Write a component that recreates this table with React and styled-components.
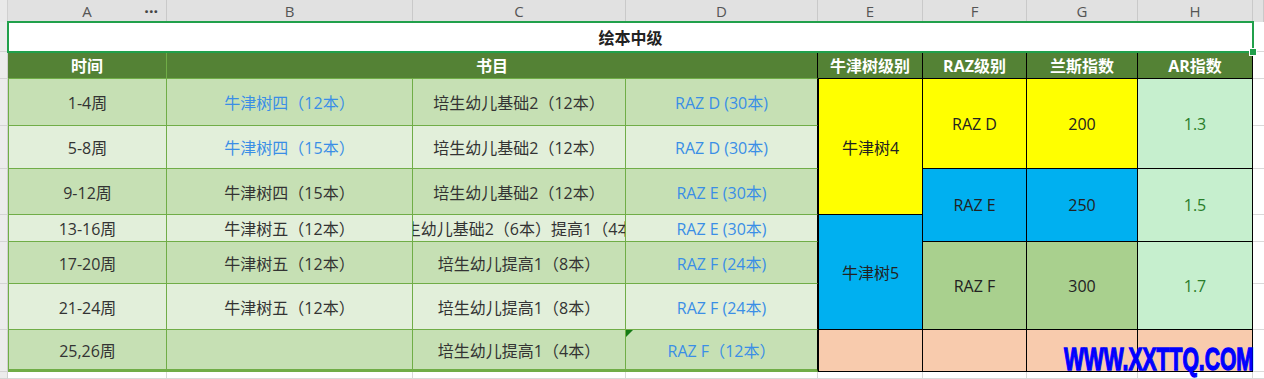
import React from 'react';
import styled, { createGlobalStyle, css } from 'styled-components';

const Global = createGlobalStyle`
  html, body { margin: 0; padding: 0; background: #fff; }
  body { font-family: "Open Sans", "Noto Sans CJK SC", sans-serif; }
`;

const GREEN = '#70ad47';
const GRID = '#d9d9d9';

const Sheet = styled.div`
  position: relative;
  display: grid;
  grid-template-columns: 8px 159px 246px 213px 192px 105px 104px 111px 115px 1fr;
  grid-template-rows: 22px 30px 27px 47px 43px 46px 27px 42px 46px 42px 1fr;
  width: 1264px;
  height: 379px;
  overflow: hidden;
  font-size: 16px;
  color: #333;
  & > * { box-sizing: border-box; min-width: 0; }
`;

const Corner = styled.div`
  background: #e9e9e9;
  border-right: 1px solid #d0d0d0;
`;

const ColHead = styled.div`
  position: relative;
  display: flex;
  align-items: center;
  justify-content: center;
  background: #e1e1e1;
  border-right: 1px solid #c9c9c9;
  color: #555;
  font-family: "Open Sans", sans-serif;
  font-size: 15px;
`;

const More = styled.span`
  position: absolute;
  right: 8px;
  top: 0;
  font-size: 16px;
  font-weight: 700;
  color: #444;
`;

const RowHead = styled.div`
  background: #ececec;
  border-right: 1px solid #d0d0d0;
  border-bottom: 1px solid #d4d4d4;
`;

const Filler = styled.div`
  background: #fff;
  border-right: ${({ $open }) => ($open ? 'none' : `1px solid ${GRID}`)};
  border-bottom: 1px solid ${GRID};
`;

const centred = css`
  display: flex;
  align-items: center;
  justify-content: center;
  white-space: nowrap;
  overflow: hidden;
`;

const TitleCell = styled.div`
  ${centred};
  position: relative;
  z-index: 2;
  overflow: visible;
  grid-column: 2 / 10;
  background: #fff;
  font-weight: 700;
  color: #222;
  outline: 2px solid #21a04b;
  outline-offset: -1px;
`;

const Handle = styled.span`
  position: absolute;
  right: -4px;
  bottom: -4px;
  width: 6px;
  height: 6px;
  background: #21a04b;
  border: 1px solid #fff;
`;

const HeadCell = styled.div`
  ${centred};
  grid-column: span ${({ $span }) => $span || 1};
  background: #548235;
  color: #fff;
  font-weight: 700;
  border-right: 1px solid ${({ $rule }) => $rule || GREEN};
  border-bottom: 1px solid ${({ $black }) => ($black ? '#000' : GREEN)};
`;

const BodyCell = styled.div`
  ${centred};
  position: relative;
  background: ${({ $dark }) => ($dark ? '#c6e0b4' : '#e2efda')};
  color: ${({ $blue }) => ($blue ? '#3a8ee6' : '#333')};
  border-left: ${({ $first }) => ($first ? `1px solid ${GREEN}` : 'none')};
  border-right: 1px solid ${({ $rule }) => $rule || GREEN};
  border-bottom: ${({ $last }) => ($last ? 3 : 1)}px solid ${GREEN};
`;

const Note = styled.span`
  position: absolute;
  left: 0;
  top: 0;
  width: 0;
  height: 0;
  border-top: 7px solid #157a15;
  border-right: 7px solid transparent;
`;

const LevelCell = styled.div`
  ${centred};
  grid-column: ${({ $c }) => $c};
  grid-row: ${({ $r }) => $r} / span ${({ $rs }) => $rs || 1};
  background: ${({ $bg }) => $bg};
  color: ${({ $ink }) => $ink || '#222'};
  border-left: ${({ $c }) => ($c === 6 ? '1px solid #000' : 'none')};
  border-right: 1px solid #000;
  border-bottom: 1px solid #000;
`;

const Mark = styled.div`
  position: absolute;
  right: 10px;
  bottom: 4px;
  z-index: 3;
  font-family: "Liberation Sans", "DejaVu Sans", sans-serif;
  font-weight: 700;
  font-size: 32px;
  line-height: 1;
  color: #0000ff;
  -webkit-text-stroke: 1.3px #0000ff;
  transform: scaleX(0.66);
  transform-origin: right bottom;
  white-space: nowrap;
`;

const LETTERS = ['A', 'B', 'C', 'D', 'E', 'F', 'G', 'H'];

const ROWS = [
  ['1-4周', ['牛津树四（12本）', true], ['培生幼儿基础2（12本）'], ['RAZ D (30本)', true]],
  ['5-8周', ['牛津树四（15本）', true], ['培生幼儿基础2（12本）'], ['RAZ D (30本)', true]],
  ['9-12周', ['牛津树四（15本）'], ['培生幼儿基础2（12本）'], ['RAZ E (30本)', true]],
  ['13-16周', ['牛津树五（12本）'], ['培生幼儿基础2（6本）提高1（4本）'], ['RAZ E (30本)', true]],
  ['17-20周', ['牛津树五（12本）'], ['培生幼儿提高1（8本）'], ['RAZ F (24本)', true]],
  ['21-24周', ['牛津树五（12本）'], ['培生幼儿提高1（8本）'], ['RAZ F (24本)', true]],
  ['25,26周', [''], ['培生幼儿提高1（4本）'], ['RAZ F（12本）', true, true]],
];

const YELLOW = '#ffff00';
const BLUE = '#00b0f0';
const OLIVE = '#a9d08e';
const PEACH = '#f8cbad';
const MINT = '#c6efce';

const LEVELS = [
  { c: 6, r: 4, rs: 3, bg: YELLOW, t: '牛津树4' },
  { c: 6, r: 7, rs: 3, bg: BLUE, t: '牛津树5' },
  { c: 6, r: 10, bg: PEACH, t: '' },
  { c: 7, r: 4, rs: 2, bg: YELLOW, t: 'RAZ D' },
  { c: 7, r: 6, rs: 2, bg: BLUE, t: 'RAZ E' },
  { c: 7, r: 8, rs: 2, bg: OLIVE, t: 'RAZ F' },
  { c: 7, r: 10, bg: PEACH, t: '' },
  { c: 8, r: 4, rs: 2, bg: YELLOW, t: '200' },
  { c: 8, r: 6, rs: 2, bg: BLUE, t: '250' },
  { c: 8, r: 8, rs: 2, bg: OLIVE, t: '300' },
  { c: 8, r: 10, bg: PEACH, t: '' },
  { c: 9, r: 4, rs: 2, bg: MINT, ink: '#2a7d2a', t: '1.3' },
  { c: 9, r: 6, rs: 2, bg: MINT, ink: '#2a7d2a', t: '1.5' },
  { c: 9, r: 8, rs: 2, bg: MINT, ink: '#2a7d2a', t: '1.7' },
  { c: 9, r: 10, bg: PEACH, t: '' },
];

export default function App() {
  return (
    <>
      <Global />
      <Sheet>
        <Corner />
        {LETTERS.map((l, i) => (
          <ColHead key={l}>
            {l}
            {i === 0 && <More>···</More>}
          </ColHead>
        ))}
        <ColHead />

        <RowHead />
        <TitleCell>
          绘本中级
          <Handle />
        </TitleCell>
        <Filler $open />

        <RowHead />
        <HeadCell>时间</HeadCell>
        <HeadCell $span={3} $rule="#000">书目</HeadCell>
        <HeadCell $rule="#000" $black>牛津树级别</HeadCell>
        <HeadCell $rule="#000" $black>RAZ级别</HeadCell>
        <HeadCell $rule="#000" $black>兰斯指数</HeadCell>
        <HeadCell $rule="#000" $black>AR指数</HeadCell>
        <Filler $open />

        {ROWS.map(([week, b, c, d], i) => {
          const dark = i % 2 === 0;
          const last = i === ROWS.length - 1;
          return (
            <React.Fragment key={week}>
              <RowHead />
              <BodyCell $dark={dark} $last={last} $first>{week}</BodyCell>
              <BodyCell $dark={dark} $last={last} $blue={b[1]}>{b[0]}</BodyCell>
              <BodyCell $dark={dark} $last={last} $blue={c[1]}>{c[0]}</BodyCell>
              <BodyCell $dark={dark} $last={last} $blue={d[1]} $rule="#000">
                {d[2] && <Note />}
                {d[0]}
              </BodyCell>
              <Filler $open />
            </React.Fragment>
          );
        })}

        {LEVELS.map((v) => (
          <LevelCell key={`${v.c}-${v.r}`} $c={v.c} $r={v.r} $rs={v.rs} $bg={v.bg} $ink={v.ink}>
            {v.t}
          </LevelCell>
        ))}

        <RowHead />
        {LETTERS.map((l) => (
          <Filler key={l} />
        ))}
        <Filler $open />

        <Mark>WWW.XXTTQ.COM</Mark>
      </Sheet>
    </>
  );
}
